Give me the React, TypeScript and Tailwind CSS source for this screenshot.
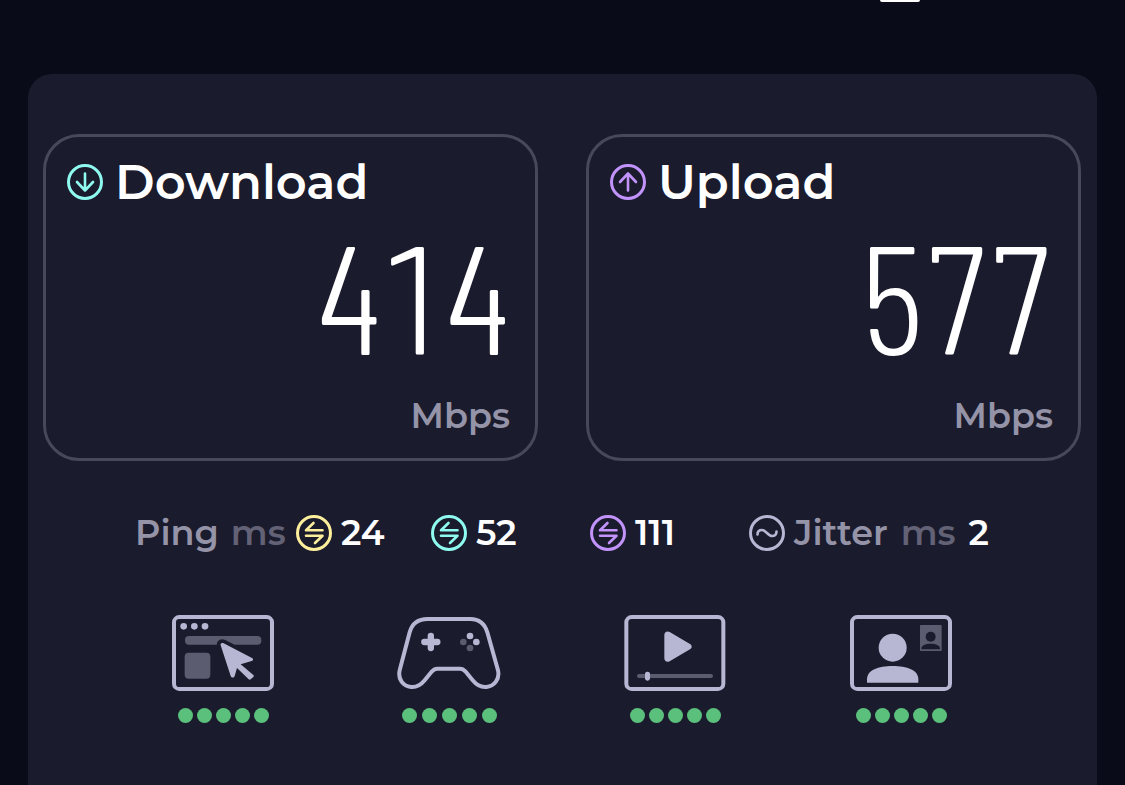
import type { ReactNode } from 'react';

const results = [
  { id: 'download', title: 'Download', value: '414', color: '#8ffaf0', arrow: 'M18 9.5v17M10 18l8 8.5 8-8.5' },
  { id: 'upload', title: 'Upload', value: '577', color: '#c293fa', arrow: 'M18 26.5v-17M10 18l8-8.5 8 8.5' },
];

const pings = [
  { id: 'idle', label: 'Idle ping', value: '24', color: '#fdee9c' },
  { id: 'download', label: 'Download ping', value: '52', color: '#8ffaf0' },
  { id: 'upload', label: 'Upload ping', value: '111', color: '#c293fa' },
];

const CircleIcon = ({ color, path }: { color: string; path: string }) => (
  <svg
    className="size-9 shrink-0"
    viewBox="0 0 36 36"
    fill="none"
    stroke={color}
    strokeLinecap="round"
    strokeLinejoin="round"
    aria-hidden="true"
  >
    <circle cx="18" cy="18" r="16.5" strokeWidth="3" />
    <path d={path} strokeWidth="2.6" />
  </svg>
);

const pingPath = 'M17.5 8L10 15.3H26.5M10 20.7H26.5L19 28';
const jitterPath = 'M8.5 19.5c0-3 2-4.500 4.500-4.500 4 0 6 6 10 6 2.500 0 4.500-1.500 4.500-4.500';

const BrowsingIcon = () => (
  <svg className="h-[76px] w-[102px]" viewBox="36 30 306 228" fill="#b8b7d3" aria-hidden="true">
    <rect x="42" y="36" width="294" height="216" rx="16" fill="none" stroke="#b8b7d3" strokeWidth="12" />
    <circle cx="71" cy="64" r="10" />
    <circle cx="103" cy="64" r="10" />
    <circle cx="135" cy="64" r="10" />
    <rect x="75" y="93" width="229" height="26" rx="12" fill="#5c5c70" />
    <rect x="74" y="143" width="77" height="78" rx="12" fill="#5c5c70" />
    <path
      d="M182 121c-2-6 4-9 9-6l85 44c5 3 4 8-1 9l-33 10 39 34-14 13-38-34-7 24c-2 6-9 6-12 0z"
      stroke="#1a1b2c"
      strokeWidth="22"
      strokeLinejoin="round"
    />
    <path d="M182 121c-2-6 4-9 9-6l85 44c5 3 4 8-1 9l-33 10 38 32c2 2 2 4 0 6l-8 7c-2 2-4 2-6 0l-35-34-7 24c-2 6-9 6-12 0z" />
  </svg>
);

const GamingIcon = () => (
  <svg className="h-[76px] w-[104px]" viewBox="38 30 312 228" fill="#b8b7d3" aria-hidden="true">
    <path
      d="M130 42H258C284 42 301 56 309 82L341 196C347 222 330 244 306 246C286 248 274 237 265 226L243 199Q236 191 227 191H159Q150 191 143 199L121 226C112 237 100 248 80 246C56 244 40 222 46 196L76 82C83 56 102 42 130 42Z"
      fill="none"
      stroke="#b8b7d3"
      strokeWidth="12"
      strokeLinejoin="round"
    />
    <path d="M139.500 93v36M120 111h39" stroke="#b8b7d3" strokeWidth="19" strokeLinecap="round" />
    <circle cx="257" cy="93" r="10" />
    <circle cx="276" cy="111" r="10" />
    <circle cx="237" cy="111" r="10" fill="#5c5c70" />
    <circle cx="257" cy="129" r="10" fill="#5c5c70" />
  </svg>
);

const StreamingIcon = () => (
  <svg className="h-[76px] w-[102px]" viewBox="44 30 306 228" fill="#b8b7d3" aria-hidden="true">
    <rect x="51" y="36" width="291" height="216" rx="16" fill="none" stroke="#b8b7d3" strokeWidth="12" />
    <path d="M165 90c0-9 8-13 16-9l61 36c7 4 7 12 0 16l-61 36c-8 4-16 0-16-9z" />
    <rect x="83" y="207" width="228" height="12" rx="6" fill="#5c5c70" />
    <rect x="107" y="200" width="15" height="27" rx="7" />
  </svg>
);

const VideoCallIcon = () => (
  <svg className="h-[76px] w-[102px]" viewBox="45 30 306 228" fill="#b8b7d3" aria-hidden="true">
    <rect x="51" y="36" width="294" height="216" rx="16" fill="none" stroke="#b8b7d3" strokeWidth="12" />
    <circle cx="173" cy="128" r="42" />
    <path d="M96 233v-10c0-28 34-40 77-40s77 12 77 40v10z" />
    <rect x="255" y="60" width="65" height="78" rx="2" fill="#5c5c70" />
    <circle cx="287" cy="95" r="15" fill="#1a1b2c" />
    <path d="M259 133v-2c0-10 12-15 28-15s28 5 28 15v2z" fill="#1a1b2c" />
  </svg>
);

const qualities: { id: string; label: string; icon: ReactNode; gap: string }[] = [
  { id: 'browsing', label: 'Web browsing', icon: <BrowsingIcon />, gap: 'gap-1' },
  { id: 'gaming', label: 'Gaming', icon: <GamingIcon />, gap: 'gap-[5px]' },
  { id: 'streaming', label: 'Video streaming', icon: <StreamingIcon />, gap: 'gap-1' },
  { id: 'calls', label: 'Video calls', icon: <VideoCallIcon />, gap: 'gap-1' },
];

const App = () => {
  return (
    <div className="flex min-h-screen flex-col bg-[#090b18] font-[Montserrat,Inter,sans-serif] text-white">
      <header className="flex h-[74px] justify-end pr-[205px]">
        <div className="h-0.5 w-10 rounded-b-sm bg-white" />
      </header>

      <main className="mx-7 flex-1 rounded-t-3xl bg-[#1a1b2c] pt-[60px] pr-4 pb-[60px] pl-[15px]">
        <div className="grid grid-cols-2 gap-12">
          {results.map((result) => (
            <section key={result.id} className="rounded-[36px] border-3 border-[#48485c] px-[21px] pt-4 pb-[15px]">
              <div className="flex items-center gap-3">
                <CircleIcon color={result.color} path={result.arrow} />
                <h2 className="text-5xl leading-[58px] font-semibold">{result.title}</h2>
              </div>
              <div className="pr-1 text-right">
                <p className="pt-1.5 font-['Barlow_Condensed','Roboto_Condensed','Liberation_Sans_Narrow',sans-serif] text-[154px] leading-[152px] font-light tabular-nums">
                  {result.value}
                </p>
                <p className="mt-5 text-[35px] leading-[54px] font-semibold text-[#9493a8]">Mbps</p>
              </div>
            </section>
          ))}
        </div>

        <div className="mx-auto mt-12 grid max-w-[854px] grid-cols-[161px_135px_159px_159px_1fr] items-center text-[35px] leading-[48px] font-semibold">
          <div className="flex gap-3">
            <span className="text-[#9493a8]">Ping</span>
            <span className="text-[#626175]">ms</span>
          </div>
          {pings.map((ping) => (
            <div key={ping.id} className="flex items-center gap-[9px]" title={ping.label}>
              <CircleIcon color={ping.color} path={pingPath} />
              <span>{ping.value}</span>
            </div>
          ))}
          <div className="flex items-center gap-[9px]">
            <CircleIcon color="#b8b7d3" path={jitterPath} />
            <span className="text-[#9493a8]">Jitter</span>
            <span className="px-1 text-[#626175]">ms</span>
            <span>2</span>
          </div>
        </div>

        <ul className="mx-auto mt-[58px] grid max-w-[904px] grid-cols-4">
          {qualities.map((quality) => (
            <li key={quality.id} className="flex flex-col items-center gap-[17px]" aria-label={quality.label}>
              {quality.icon}
              <div className={`flex ${quality.gap}`}>
                {[1, 2, 3, 4, 5].map((dot) => (
                  <span key={dot} className="size-[15px] rounded-full bg-[#5bc07c]" />
                ))}
              </div>
            </li>
          ))}
        </ul>
      </main>
    </div>
  );
};

export default App;
